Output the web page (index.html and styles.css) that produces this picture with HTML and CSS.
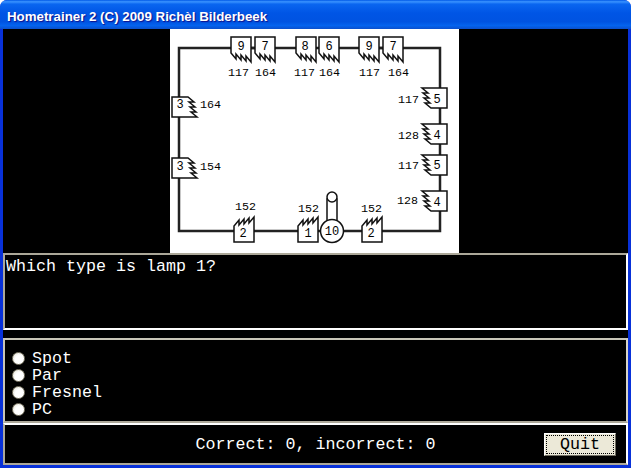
FILE: index.html
```html
<!DOCTYPE html>
<html lang="en">
<head>
  <meta charset="UTF-8" />
  <title>Hometrainer 2</title>
  <link rel="stylesheet" href="styles.css">
</head>
<body>
  <div class="window">
    <header class="titlebar">Hometrainer 2 (C) 2009 Richèl Bilderbeek</header>
    <div class="client">
      <div class="picture">
        <svg class="rig" width="289" height="224" viewBox="170 29 289 224">
          <defs>
            <path id="lamp" d="M0 0H20V25L15 19V24L10 18V23L5 17V22L0 16Z" />
          </defs>

          <!-- the wire round the stage -->
          <path class="wire" d="M179 231V48H440V231Z" />
          <path class="wire" d="M251 48H255M379 48H383" />

          <!-- top row -->
          <use href="#lamp" class="lamp" x="231" y="37" />
          <use href="#lamp" class="lamp" x="255" y="37" />
          <use href="#lamp" class="lamp" x="296" y="37" />
          <use href="#lamp" class="lamp" x="319" y="37" />
          <use href="#lamp" class="lamp" x="359" y="37" />
          <use href="#lamp" class="lamp" x="383" y="37" />

          <!-- left side -->
          <use href="#lamp" class="lamp" transform="matrix(0 1 1 0 172 97)" />
          <use href="#lamp" class="lamp" transform="matrix(0 1 1 0 172 158)" />

          <!-- right side -->
          <use href="#lamp" class="lamp" transform="matrix(0 -1 -1 0 447 108)" />
          <use href="#lamp" class="lamp" transform="matrix(0 -1 -1 0 447 144)" />
          <use href="#lamp" class="lamp" transform="matrix(0 -1 -1 0 447 175)" />
          <use href="#lamp" class="lamp" transform="matrix(0 -1 -1 0 447 211)" />

          <!-- bottom row -->
          <use href="#lamp" class="lamp" transform="matrix(1 0 0 -1 234 242)" />
          <use href="#lamp" class="lamp" transform="matrix(1 0 0 -1 298 242)" />
          <use href="#lamp" class="lamp" transform="matrix(1 0 0 -1 362 242)" />

          <!-- lamp 10 with its stalk -->
          <path class="lamp" d="M327 222V199H337V222" />
          <circle class="lamp" cx="332" cy="197" r="5" />
          <circle class="lamp" cx="332" cy="231" r="11.5" />

          <g class="num">
            <text x="241" y="50">9</text>
            <text x="265" y="50">7</text>
            <text x="305" y="50">8</text>
            <text x="329" y="50">6</text>
            <text x="369" y="50">9</text>
            <text x="393" y="50">7</text>
            <text x="180" y="108">3</text>
            <text x="180" y="170">3</text>
            <text x="437" y="103">5</text>
            <text x="437" y="139">4</text>
            <text x="437" y="169">5</text>
            <text x="437" y="206">4</text>
            <text x="243" y="237">2</text>
            <text x="308" y="237">1</text>
            <text x="332" y="235">10</text>
            <text x="371" y="237">2</text>
          </g>

          <g class="watt">
            <text x="228" y="76">117</text>
            <text x="255" y="76">164</text>
            <text x="294" y="76">117</text>
            <text x="319" y="76">164</text>
            <text x="359" y="76">117</text>
            <text x="388" y="76">164</text>
            <text x="200" y="108">164</text>
            <text x="200" y="170">154</text>
            <text x="398" y="103">117</text>
            <text x="398" y="139">128</text>
            <text x="398" y="169">117</text>
            <text x="397" y="204">128</text>
            <text x="235" y="210">152</text>
            <text x="298" y="212">152</text>
            <text x="361" y="212">152</text>
          </g>
        </svg>
      </div>

      <div class="question">Which type is lamp 1?</div>

      <div class="answers">
        <label class="answer"><span class="radio"></span>Spot</label>
        <label class="answer"><span class="radio"></span>Par</label>
        <label class="answer"><span class="radio"></span>Fresnel</label>
        <label class="answer"><span class="radio"></span>PC</label>
      </div>

      <div class="status">
        <span></span>
        <span class="score">Correct: 0, incorrect: 0</span>
        <button class="quit"><span class="focus">Quit</span></button>
      </div>
    </div>
  </div>
</body>
</html>
```

FILE: styles.css
```css
html, body {
  margin: 0;
  padding: 0;
}
body {
  width: 631px;
  height: 468px;
  overflow: hidden;
  font-family: "Liberation Mono", "Courier New", monospace;
  font-size: 16.67px;
  color: white;
}
.window {
  height: 468px;
  display: flex;
  flex-direction: column;
  box-sizing: border-box;
  background: #0831d9;
  border-radius: 7px 7px 0 0;
}
.titlebar {
  height: 29px;
  box-sizing: border-box;
  padding: 8px 0 0 7px;
  font-family: "Liberation Sans", Arial, sans-serif;
  font-weight: bold;
  font-size: 13.3px;
  line-height: 17px;
  color: white;
  text-shadow: 1px 1px 1px #0f1089;
  border-radius: 7px 7px 0 0;
  background: linear-gradient(to bottom, #0058e6 0%, #3a93ff 6%, #0a66f0 14%, #0055e5 45%, #0053e1 75%, #0463ee 88%, #0a4fcc 100%);
}
.client {
  height: 436px;
  margin: 0 3px;
  background: black;
  display: flex;
  flex-direction: column;
}
.picture {
  height: 224px;
  display: flex;
  justify-content: center;
}
.rig {
  display: block;
  background: white;
  margin-right: 2px;
}
.wire {
  fill: none;
  stroke: #222;
  stroke-width: 2.5px;
}
.lamp {
  fill: white;
  stroke: #111;
  stroke-width: 1.5px;
}
.num, .watt {
  opacity: 0.99;
}
.num text {
  font-size: 12px;
  text-anchor: middle;
  fill: black;
}
.watt text {
  font-size: 11.67px;
  fill: black;
}
.question {
  height: 77px;
  box-sizing: border-box;
  padding: 3px 1px;
  line-height: 18px;
  border: 2px solid;
  border-color: #aca899 white white #aca899;
}
.answers {
  height: 85px;
  margin-top: 8px;
  box-sizing: border-box;
  padding: 10px 0 0 7px;
  border: 2px solid #c8c5b6;
  border-bottom-color: #aca899;
  border-right-color: #d8d5c8;
}
.answer {
  display: flex;
  align-items: center;
  height: 17px;
  line-height: 17px;
}
.radio {
  width: 13px;
  height: 13px;
  box-sizing: border-box;
  margin-right: 7px;
  border: 1px solid #85816f;
  border-radius: 50%;
  background: radial-gradient(circle at 60% 60%, white 45%, #dcd9cb 100%);
}
.status {
  height: 42px;
  box-sizing: border-box;
  padding-top: 8px;
  display: grid;
  grid-template-columns: 1fr auto 1fr;
  align-items: start;
  border: 2px solid;
  border-color: white white #aca899 #aca899;
}
.score {
  line-height: 24px;
}
.quit {
  justify-self: end;
  width: 72px;
  height: 23px;
  margin-right: 10px;
  padding: 2px;
  box-sizing: border-box;
  font: inherit;
  color: black;
  background: #ece9d8;
  border: 1px solid;
  border-color: white #716f64 #716f64 white;
}
.focus {
  display: block;
  height: 17px;
  line-height: 17px;
  outline: 1px dotted black;
}
```
